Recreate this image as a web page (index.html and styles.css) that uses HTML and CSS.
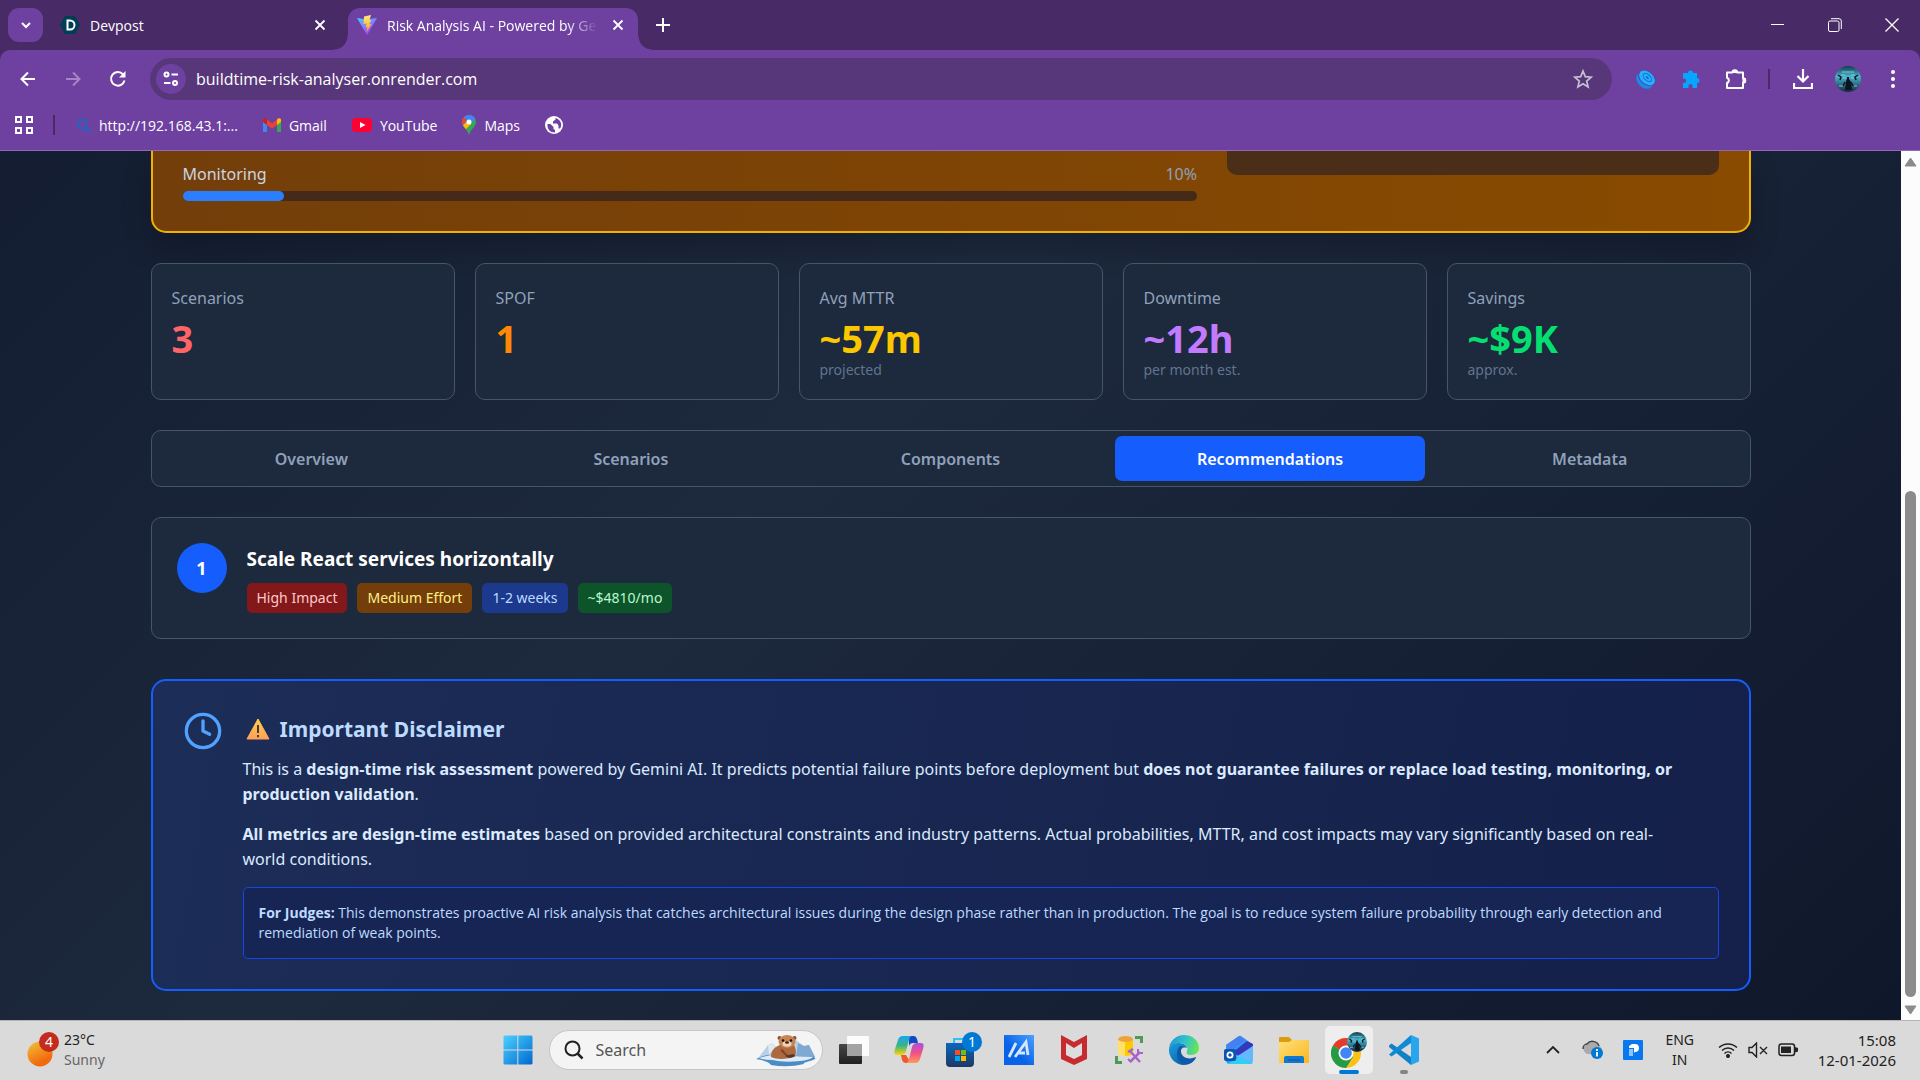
FILE: index.html
```
<!DOCTYPE html>
<html lang="en">
<head>
    <meta charset="UTF-8">
    <meta name="viewport" content="width=device-width, initial-scale=1.0">
    <title>Risk Analysis AI - Powered by Gemini</title>
    <link rel="stylesheet" href="styles.css">
</head>
<body>
    <!-- Shared symbols -->
    <svg class="defs" width="0" height="0">
        <defs>
            <symbol id="close" viewBox="0 0 12 12"><path d="M1.5 1.5l9 9M10.5 1.5l-9 9" fill="none" stroke="currentColor" stroke-width="1.8"/></symbol>
            <linearGradient id="avatarFill" x1="0" y1="0" x2="0" y2="1">
                <stop offset="0" stop-color="#123a4c"/>
                <stop offset="0.4" stop-color="#4ab4cc"/>
                <stop offset="1" stop-color="#14283a"/>
            </linearGradient>
            <symbol id="avatar" viewBox="0 0 26 26">
                <circle cx="13" cy="13" r="13" fill="url(#avatarFill)"/>
                <path d="M3 9l3 2-1 3M23 9l-3 2 1 3M8 20l2-4M18 20l-2-4" stroke="#0a1624" stroke-width="1.500" fill="none"/>
                <path d="M10 24l1-9 1-2v-2h2v2l2 3 1 8z" fill="#0a1424"/>
                <path d="M7 6h12M6 9h4M16 9h4M8 12h3M16 12h3M4 20h4M19 20h3" stroke="#7cc8d8" stroke-width="1"/>
            </symbol>
        </defs>
    </svg>

    <header class="browser">
        <div class="tab-strip">
            <button class="tab-search" aria-label="Search tabs">
                <svg width="12" height="12" viewBox="0 0 12 12"><path d="M2 4l4 4 4-4" fill="none" stroke="#fff" stroke-width="2"/></svg>
            </button>
            <div class="tab">
                <svg width="20" height="20" viewBox="0 0 20 20"><path d="M5 1h10l5 9-5 9H5L0 10z" fill="#003e54"/><path d="M7.500 5.500V14.500H10a4.500 4.500 0 0 0 0-9z" fill="none" stroke="#fff" stroke-width="2"/></svg>
                <span class="tab-title">Devpost</span>
                <button class="tab-close" aria-label="Close Devpost"><svg width="12" height="12"><use href="#close"/></svg></button>
            </div>
            <div class="tab tab-active">
                <svg width="20" height="20" viewBox="0 0 20 20">
                    <defs>
                        <linearGradient id="vite" x1="0" y1="0" x2="0.6" y2="1"><stop offset="0" stop-color="#41d1ff"/><stop offset="1" stop-color="#bd34fe"/></linearGradient>
                        <linearGradient id="bolt" x1="0" y1="0" x2="0" y2="1"><stop offset="0" stop-color="#ffea83"/><stop offset="1" stop-color="#ffa800"/></linearGradient>
                    </defs>
                    <path d="M0 3l9.500 1.500L20 3 10 20z" fill="url(#vite)"/>
                    <path d="M14 0L7 1.500 6.500 9l3-.5-.8 4 1.800-.5L9.500 17l5-8-2.500.5L14.500 5l-2 .3z" fill="url(#bolt)"/>
                </svg>
                <span class="tab-title tab-fade">Risk Analysis AI - Powered by Gemini</span>
                <button class="tab-close" aria-label="Close Risk Analysis AI"><svg width="12" height="12"><use href="#close"/></svg></button>
            </div>
            <button class="new-tab" aria-label="New tab">
                <svg width="14" height="14" viewBox="0 0 14 14"><path d="M7 0v14M0 7h14" stroke="#fff" stroke-width="2"/></svg>
            </button>
            <div class="window-controls">
                <button aria-label="Minimize"><svg width="14" height="14" viewBox="0 0 14 14"><path d="M0 6.500h13" stroke="#fff"/></svg></button>
                <button aria-label="Restore"><svg width="14" height="14" viewBox="0 0 14 14"><rect x="0.500" y="3" width="10.500" height="10.500" rx="1.500" fill="none" stroke="#fff"/><path d="M3 .7h8a2.300 2.300 0 0 1 2.300 2.300v8" fill="none" stroke="#fff"/></svg></button>
                <button aria-label="Close window"><svg width="14" height="14" viewBox="0 0 14 14"><path d="M.5.5l13 13M13.500.5l-13 13" stroke="#fff" stroke-width="1.300"/></svg></button>
            </div>
        </div>

        <div class="toolbar">
            <div class="nav-buttons">
                <button aria-label="Back"><svg width="16" height="16" viewBox="0 0 16 16"><path d="M15 8H2M8 1.500L1.500 8 8 14.500" fill="none" stroke="#fff" stroke-width="2"/></svg></button>
                <button aria-label="Forward" disabled><svg width="16" height="16" viewBox="0 0 16 16"><path d="M1 8h13M8 1.500L14.500 8 8 14.500" fill="none" stroke="#a386c3" stroke-width="2"/></svg></button>
                <button aria-label="Reload"><svg width="18" height="18" viewBox="0 0 18 18"><path d="M15.500 10.500A6.800 6.800 0 1 1 14 4.300" fill="none" stroke="#fff" stroke-width="2"/><path d="M16.500 1v6.500H10z" fill="#fff"/></svg></button>
            </div>
            <div class="address-bar">
                <button class="site-info" aria-label="Site information">
                    <svg width="16" height="16" viewBox="0 0 16 16" fill="none" stroke="#fff" stroke-width="2"><circle cx="3.500" cy="3.500" r="2"/><path d="M8.500 3.500H15M1 12h6.500"/><circle cx="12" cy="12" r="2"/></svg>
                </button>
                <input type="text" aria-label="Address" value="buildtime-risk-analyser.onrender.com">
                <button class="bookmark" aria-label="Bookmark this page">
                    <svg width="20" height="20" viewBox="0 0 20 20"><path d="M10 2l2.300 5.600 6 .5-4.600 3.900 1.400 5.900L10 14.800 4.900 17.900l1.400-5.900L1.700 8.100l6-.5z" fill="none" stroke="#c9bfd3" stroke-width="1.700"/></svg>
                </button>
            </div>
            <div class="extensions">
                <button aria-label="Extension"><svg width="20" height="20" viewBox="0 0 20 20"><g transform="rotate(42 10 10)"><ellipse cx="10" cy="12" rx="9.500" ry="7" fill="#168be8"/><ellipse cx="10" cy="8.500" rx="9.500" ry="6.500" fill="#25b0ff" stroke="#5b3fa8"/><ellipse cx="10" cy="8" rx="5" ry="3" fill="none" stroke="#176cc8"/><ellipse cx="10" cy="8" rx="2" ry="1" fill="#176cc8"/></g></svg></button>
                <button aria-label="Puzzle extension"><svg width="20" height="20" viewBox="0 0 20 20"><path d="M2 4h5a2.500 2.500 0 1 1 5 0h4v5a2.500 2.500 0 1 1 0 5v5h-4.500v-2a2 2 0 0 0-4 0v2H2v-5h1a2 2 0 0 0 0-4.500H2z" fill="#05a6ff"/></svg></button>
                <button aria-label="Extensions"><svg width="22" height="22" viewBox="0 0 22 22"><path d="M2 4.500h5.500a2.300 2.300 0 0 1 4.600 0H18v5.700a2.200 2.200 0 0 1 0 4.500V20H2v-5a2.800 2.800 0 0 0 0-5.300z" fill="none" stroke="#fff" stroke-width="2" stroke-linejoin="round"/><path d="M8 3.500h4M19 10v5" stroke="#fff" stroke-width="3"/></svg></button>
                <span class="divider"></span>
                <button aria-label="Downloads"><svg width="20" height="22" viewBox="0 0 20 22"><path d="M10 1v12M4.500 8l5.500 5.500L15.500 8M1 15v5h18v-5" fill="none" stroke="#fff" stroke-width="2.200"/></svg></button>
                <button aria-label="Profile"><svg width="26" height="26"><use href="#avatar"/></svg></button>
                <button aria-label="Menu"><svg width="6" height="20" viewBox="0 0 6 20" fill="#fff"><circle cx="3" cy="3" r="2"/><circle cx="3" cy="10" r="2"/><circle cx="3" cy="17" r="2"/></svg></button>
            </div>
        </div>

        <nav class="bookmarks">
            <button class="apps" aria-label="Apps"><svg width="18" height="18" viewBox="0 0 18 18" fill="none" stroke="#fff" stroke-width="2"><path d="M1 1h5v5H1zM12 1h5v5h-5zM1 12h5v5H1zM12 12h5v5h-5z"/></svg></button>
            <span class="divider"></span>
            <a href="#"><svg width="16" height="16" viewBox="0 0 16 16"><circle cx="7.500" cy="7" r="4.500" fill="none" stroke="#1769c0" stroke-width="1.800"/><path d="M10.500 10.500L15 15" stroke="#1769c0" stroke-width="2"/></svg>http://192.168.43.1:...</a>
            <a href="#"><svg width="18" height="14" viewBox="0 0 18 14"><path d="M0 2v12h4V5z" fill="#4285f4"/><path d="M14 5v9h4V2z" fill="#34a853"/><path d="M14 1.500V7l4-3V2c0-2-2.500-2.500-4-.5z" fill="#fbbc04"/><path d="M4 1.500l5 4 5-4V7L9 10.500 4 7z" fill="#ea4335"/><path d="M0 2v2l4 3V1.500C2.500-.5 0 0 0 2z" fill="#c5221f"/></svg>Gmail</a>
            <a href="#"><svg width="20" height="14" viewBox="0 0 20 14"><rect width="20" height="14" rx="4" fill="#f03"/><path d="M8 4l5.500 3L8 10z" fill="#fff"/></svg>YouTube</a>
            <a href="#"><svg width="14" height="20" viewBox="0 0 14 20"><path d="M7 0a7 7 0 0 1 7 7c0 5-5.500 7-7 13C5.500 14 0 12 0 7a7 7 0 0 1 7-7z" fill="#34a853"/><path d="M7 0a7 7 0 0 1 6.500 4.500L2.500 12.500 0 7a7 7 0 0 1 7-7z" fill="#4285f4"/><path d="M1.500 2.500L5 5 .9 10.300A7 7 0 0 1 1.500 2.500z" fill="#ea4335"/><path d="M.9 10.300L4.500 7 9 9l-5 5.300z" fill="#fbbc04"/><circle cx="7" cy="7" r="2.500" fill="#fff"/></svg>Maps</a>
            <a href="#" aria-label="Web page"><svg width="18" height="18" viewBox="0 0 18 18"><circle cx="9" cy="9" r="9" fill="#fff"/><path d="M2.500 8h3l3 3v2l1.500 1v2.500C5 16.500 2 13 2.500 8z" fill="#6e41a1"/><path d="M10.500 2v1.500L8 5.500v2h4l1.500 2v3h1.500c1.500-2 1.500-4.500.5-6.500S12.500 2.500 10.500 2z" fill="#6e41a1"/></svg></a>
        </nav>
    </header>

    <main class="viewport">
        <div class="page">
            <div class="container">
                <section class="risk-card">
                    <div class="risk-bars">
                        <div class="risk-label"><span>Monitoring</span><span class="risk-value">10%</span></div>
                        <div class="risk-track"><div class="risk-fill" style="width: 10%"></div></div>
                    </div>
                    <div class="risk-panel"></div>
                </section>

                <section class="stats">
                    <div class="stat"><p class="stat-name">Scenarios</p><p class="stat-value red">3</p></div>
                    <div class="stat"><p class="stat-name">SPOF</p><p class="stat-value orange">1</p></div>
                    <div class="stat"><p class="stat-name">Avg MTTR</p><p class="stat-value yellow">~57m</p><p class="stat-note">projected</p></div>
                    <div class="stat"><p class="stat-name">Downtime</p><p class="stat-value purple">~12h</p><p class="stat-note">per month est.</p></div>
                    <div class="stat"><p class="stat-name">Savings</p><p class="stat-value green">~$9K</p><p class="stat-note">approx.</p></div>
                </section>

                <nav class="tabs">
                    <button>Overview</button>
                    <button>Scenarios</button>
                    <button>Components</button>
                    <button class="active">Recommendations</button>
                    <button>Metadata</button>
                </nav>

                <section class="recommendation">
                    <div class="rec-number">1</div>
                    <div>
                        <h4>Scale React services horizontally</h4>
                        <div class="badges">
                            <span class="badge badge-red">High Impact</span>
                            <span class="badge badge-yellow">Medium Effort</span>
                            <span class="badge badge-blue">1-2 weeks</span>
                            <span class="badge badge-green">~$4810/mo</span>
                        </div>
                    </div>
                </section>

                <section class="disclaimer">
                    <svg class="clock-icon" width="40" height="40" viewBox="0 0 24 24" fill="none" stroke="#51a2ff" stroke-width="2" stroke-linecap="round" stroke-linejoin="round"><circle cx="12" cy="12" r="10"/><path d="M12 6v6l4 2"/></svg>
                    <div class="disclaimer-body">
                        <h3>
                            <svg width="24" height="22" viewBox="0 0 24 22"><defs><linearGradient id="warn" x1="0" y1="0" x2="0" y2="1"><stop offset="0" stop-color="#ffcf48"/><stop offset="1" stop-color="#ffa05a"/></linearGradient></defs><path d="M12 1l11 20H1z" fill="url(#warn)" stroke="url(#warn)" stroke-linejoin="round"/><path d="M12 7v8M12 17v2.300" stroke="#453b35" stroke-width="2"/></svg>
                            Important Disclaimer
                        </h3>
                        <p>This is a <strong>design-time risk assessment</strong> powered by Gemini AI. It predicts potential failure points before deployment but <strong>does not guarantee failures or replace load testing, monitoring, or production validation</strong>.</p>
                        <p><strong>All metrics are design-time estimates</strong> based on provided architectural constraints and industry patterns. Actual probabilities, MTTR, and cost impacts may vary significantly based on real-world conditions.</p>
                        <div class="judges"><strong>For Judges:</strong> This demonstrates proactive AI risk analysis that catches architectural issues during the design phase rather than in production. The goal is to reduce system failure probability through early detection and remediation of weak points.</div>
                    </div>
                </section>
            </div>
        </div>
        <div class="scrollbar">
            <svg width="13" height="10" viewBox="0 0 13 10"><path d="M6.500 1L12 9H1z" fill="#8b8b8b" stroke="#8b8b8b" stroke-linejoin="round"/></svg>
            <div class="scroll-space"></div>
            <div class="scroll-thumb"></div>
            <svg width="13" height="10" viewBox="0 0 13 10"><path d="M6.500 9L12 1H1z" fill="#8b8b8b" stroke="#8b8b8b" stroke-linejoin="round"/></svg>
        </div>
    </main>

    <footer class="taskbar">
        <button class="weather">
            <svg width="32" height="36" viewBox="0 0 32 36"><defs><linearGradient id="sun" x1="0.200" y1="0" x2="0.700" y2="1"><stop offset="0" stop-color="#f0bd35"/><stop offset="0.800" stop-color="#f26a0d"/></linearGradient></defs><circle cx="13" cy="22" r="12.500" fill="url(#sun)"/><circle cx="22" cy="10" r="10" fill="#c42b1c"/><text x="22" y="15" class="icon-text">4</text></svg>
            <span class="weather-text"><span>23°C</span><span class="muted">Sunny</span></span>
        </button>

        <div class="task-apps">
            <button aria-label="Start"><svg width="30" height="30" viewBox="0 0 30 30"><defs><linearGradient id="win" x1="0" y1="0" x2="1" y2="1"><stop offset="0" stop-color="#4cd0ff"/><stop offset="1" stop-color="#0069cf"/></linearGradient></defs><path d="M1.500 0.500h12.800v14H.5v-13zM15.300.5h13.200l1 1v13H15.300zM.5 15.500h13.800v14H1.500l-1-1zM15.300 15.500h14.200v13l-1 1H15.300z" fill="url(#win)"/></svg></button>
            <label class="search">
                <svg width="20" height="20" viewBox="0 0 20 20"><circle cx="8.500" cy="8.500" r="7" fill="none" stroke="#222" stroke-width="2"/><path d="M13.500 13.500l5 5" stroke="#222" stroke-width="2.500"/></svg>
                <input type="text" placeholder="Search" aria-label="Search">
                <svg width="60" height="34" viewBox="0 0 60 34">
                    <path d="M3 24l9-12 4-2 4 4 8-5 12-2 8 6 5-1 6 12z" fill="#b9cfe4"/>
                    <path d="M42 10l6 3 5-1 6 12H40z" fill="#7fa9d0"/>
                    <path d="M12 12l4-2 3 4-6 8z" fill="#dfe9f2"/>
                    <path d="M0 26q10-6 26-4t32 2q4 2-4 4t-6 3q-16 4-33 1Q12 28 0 26z" fill="#4b8cc4"/>
                    <path d="M3 25q14-5 27-3t27 2q-3 3-13 4-16 2-28-1-8 0-13-2z" fill="#dcebf7"/>
                    <path d="M15 24c0-8 5-10 9-12l14 0c2 4 3 9 0 12-6 2-17 3-23 0z" fill="#ad683e"/>
                    <path d="M25 17c4 2 4 6 9 7" stroke="#7b4428" stroke-width="2" fill="none"/>
                    <path d="M29 23l8-2 3 2-6 2z" fill="#5c3230"/>
                    <circle cx="23.500" cy="5" r="2" fill="#8b4f2e"/><circle cx="38.500" cy="5" r="2" fill="#8b4f2e"/>
                    <ellipse cx="31" cy="8.500" rx="8.500" ry="6.500" fill="#c88454"/>
                    <ellipse cx="31" cy="11" rx="4.500" ry="2.800" fill="#f2d5b8"/>
                    <circle cx="27" cy="7.500" r="1.300" fill="#1c1210"/><circle cx="35" cy="7.500" r="1.300" fill="#1c1210"/><ellipse cx="31" cy="9.500" rx="2" ry="1.200" fill="#37221f"/>
                </svg>
            </label>
            <button aria-label="Task view"><svg width="30" height="30" viewBox="0 0 30 30"><defs><linearGradient id="tv" x1="0" y1="0" x2="0" y2="1"><stop offset="0" stop-color="#474747"/><stop offset="1" stop-color="#202020"/></linearGradient></defs><rect y="9" width="23" height="20" rx="1" fill="url(#tv)"/><rect x="8" y="1" width="22" height="20" rx="1" fill="#fff" opacity="0.900"/><rect x="8" y="9" width="15" height="12" fill="#a3a3a3"/></svg></button>
            <button aria-label="Copilot"><svg width="30" height="30" viewBox="0 0 30 30"><defs><linearGradient id="cp1" x1="0" y1="0" x2="0" y2="1"><stop offset="0" stop-color="#18a7ee"/><stop offset="0.500" stop-color="#37b489"/><stop offset="1" stop-color="#ffd500"/></linearGradient><linearGradient id="cp2" x1="0" y1="0" x2="0" y2="1"><stop offset="0" stop-color="#a852e0"/><stop offset="0.500" stop-color="#f25084"/><stop offset="1" stop-color="#ff9a55"/></linearGradient></defs><path d="M15 1h5q2 0 3 3l1 4h-5q-3 0-4 3z" fill="#1349c4"/><path d="M7 20l1 5q1 3 4 3h5l-5-8z" fill="#ef5a2a"/><path d="M9 1h9q-2 0-3 4l-3 11q-1 4-5 4H3q-4 0-2-6L4 5q1-4 5-4z" fill="url(#cp1)"/><path d="M21 28h-9q2 0 3-4l3-12q1-4 5-4h4q4 0 2 6l-3 10q-1 4-5 4z" fill="url(#cp2)"/></svg></button>
            <button aria-label="Microsoft Store"><svg width="36" height="36" viewBox="0 0 36 36"><defs><linearGradient id="store" x1="0" y1="0" x2="0" y2="1"><stop offset="0" stop-color="#0a68bd"/><stop offset="1" stop-color="#203763"/></linearGradient></defs><path d="M8 11V7h14v4" fill="none" stroke="#2fc0f4" stroke-width="2"/><path d="M0 11h28v20q0 4-4 4H4q-4 0-4-4z" fill="url(#store)"/><path d="M9 18h5v5H9z" fill="#f25022"/><path d="M15 18h5v5h-5z" fill="#7fba00"/><path d="M9 24h5v5H9z" fill="#00a4ef"/><path d="M15 24h5v5h-5z" fill="#ffb900"/><circle cx="26" cy="10" r="10" fill="#0078d4"/><text x="26" y="15" class="icon-text">1</text></svg></button>
            <button aria-label="MyASUS"><svg width="30" height="30" viewBox="0 0 30 30"><defs><linearGradient id="asus" x1="0" y1="1" x2="1" y2="0"><stop offset="0.400" stop-color="#0763e8"/><stop offset="1" stop-color="#4ba0ff"/></linearGradient></defs><path d="M0 0h30v30H0z" fill="url(#asus)"/><path d="M5 22L12 8M11 22L22 7l2 13M15 18h6" fill="none" stroke="#d4e8ff" stroke-width="2.800"/></svg></button>
            <button aria-label="McAfee"><svg width="28" height="30" viewBox="0 0 28 30"><path d="M1 0l13 7L27 0v24l-13 6L1 24z" fill="#c62c2f"/><path d="M6 8l8 5 8-5v12l-8 4-8-4z" fill="#ddd"/></svg></button>
            <button aria-label="Database tools"><svg width="30" height="30" viewBox="0 0 30 30"><path d="M4 4h15v15q-7 4-15 0z" fill="#ffe06a"/><path d="M11 5h8v14q-3 2-8 2z" fill="#fcc905"/><ellipse cx="11.500" cy="4" rx="7.500" ry="3" fill="#eda23b"/><path d="M21 2.500h6.500V8M2.500 21v6.500H8" fill="none" stroke="#4c9b4f" stroke-width="3"/><path d="M16 27l10-10M14 17l5-3M16 16l10 11" stroke="#aa64c8" stroke-width="2.500"/><path d="M24 14v4h5M14 24l3 3" fill="none" stroke="#aa64c8" stroke-width="2"/></svg></button>
            <button aria-label="Edge"><svg width="30" height="30" viewBox="0 0 30 30"><defs><linearGradient id="edge" x1="0" y1="0.400" x2="1" y2="0.600"><stop offset="0" stop-color="#2299d8"/><stop offset="0.500" stop-color="#2fc3cb"/><stop offset="1" stop-color="#6be84c"/></linearGradient><linearGradient id="edgeb" x1="0" y1="0" x2="1" y2="1"><stop offset="0" stop-color="#1ba0dd"/><stop offset="1" stop-color="#094a95"/></linearGradient></defs><path d="M0 14A15 15 0 0 1 15 0c9 0 15 6 15 13 0 5-4 7-8 7-4 0-5-2-4-4 2-4-2-8-7-8-6 0-10 3-11 6z" fill="url(#edge)"/><path d="M0 14c1-4 5-6 10-6 5 0 8 3 8 5-6-2-8 4-5 8 3 4 9 5 14 1-2 5-7 8-12 8A15 15 0 0 1 0 14z" fill="url(#edgeb)"/><path d="M10 12c-4 7-2 15 5 17 6 1 11-3 12-7-7 3-14 1-15-5-.4-3 1-5 3-6-2 0-4 0-5 1z" fill="#0c5aa8"/></svg></button>
            <button aria-label="Outlook"><svg width="30" height="30" viewBox="0 0 30 30"><path d="M2 10L15 1q1-.7 2 0l11 8v17q0 3-3 3H6q-4 0-4-4z" fill="#239df3"/><path d="M2 10L15 1l7 4L6 16z" fill="#477ff0"/><path d="M8 18L23 6l6 3v2L16 21z" fill="#3736bd"/><path d="M12 22l17-11v15l-1 2z" fill="#65b7ff"/><path d="M3 29l13-7 13 6q-1 1-3 1z" fill="#31cef4"/><rect y="14" width="12" height="12" rx="2" fill="#0b54b2"/><circle cx="6" cy="20" r="2.600" fill="none" stroke="#fff" stroke-width="1.800"/></svg></button>
            <button aria-label="File Explorer"><svg width="30" height="28" viewBox="0 0 30 28"><defs><linearGradient id="folder" x1="0" y1="0" x2="1" y2="1"><stop offset="0" stop-color="#ffe07a"/><stop offset="1" stop-color="#fbb71c"/></linearGradient></defs><path d="M0 2q0-1 1-1h9l3 3h16q1 0 1 1v8H0z" fill="#db9d0b"/><path d="M0 6h10l3-2h16q1 0 1 1v22H0z" fill="url(#folder)"/><path d="M5 27v-5q0-2 2-2h16q2 0 2 2v5z" fill="#1178cd"/><path d="M9 24h12" stroke="#0855a0"/></svg></button>
            <button class="running" aria-label="Google Chrome"><svg width="36" height="36" viewBox="0 0 36 36"><circle cx="15" cy="21" r="15" fill="#fbc116"/><path d="M15 21L2 13.500A15 15 0 0 1 28 13.500H15z" fill="#e33b2e"/><path d="M2 13.500A15 15 0 0 0 15 36l7-11-7-4z" fill="#269a45"/><circle cx="15" cy="21" r="7.500" fill="#fff"/><circle cx="15" cy="21" r="5.800" fill="#4285f4"/><use href="#avatar" x="16" y="0" width="20" height="20"/></svg></button>
            <button class="opened" aria-label="Visual Studio Code"><svg width="30" height="30" viewBox="0 0 30 30"><path d="M0 10.500l2.500-2L22 22v8L0 12z" fill="#1280c4"/><path d="M0 19.500L22 0v8L2.500 21.500z" fill="#0e8ad6"/><path d="M22 0l8 3.500v23L22 30z" fill="#27a6ee"/></svg></button>
        </div>

        <div class="tray">
            <button aria-label="Show hidden icons"><svg width="14" height="10" viewBox="0 0 14 10"><path d="M1 8l6-6 6 6" fill="none" stroke="#222" stroke-width="1.800"/></svg></button>
            <button aria-label="OneDrive"><svg width="22" height="20" viewBox="0 0 22 20"><path d="M5 14a5 5 0 0 1-1-9C7 0 15-1 17 6c4 1 4 8 0 8z" fill="#aaa"/><path d="M1 9c0-3 2-5 4-5 4-5 11-2 12 2" fill="none" stroke="#444" stroke-width="1.500"/><circle cx="15" cy="13" r="6" fill="#0078d4"/><path d="M15 9v2M15 12v4.500" stroke="#fff" stroke-width="1.800"/></svg></button>
            <button aria-label="Print helper"><svg width="20" height="20" viewBox="0 0 20 20"><rect width="20" height="20" rx="1" fill="#0878f0"/><path d="M6 6l3-2h3a4 4 0 0 1 0 8l-1 1V8H6z" fill="#fff"/><path d="M6 9h4v7H6z" fill="#8cc4ff"/></svg></button>
            <button class="tray-text language"><span>ENG</span><span>IN</span></button>
            <button class="status" aria-label="Network, volume and battery">
                <svg width="20" height="16" viewBox="0 0 20 16" fill="none" stroke="#222" stroke-width="1.500"><path d="M1 5.500a13 13 0 0 1 18 0M4 8.500a8.500 8.500 0 0 1 12 0M6.500 11.500a5 5 0 0 1 7 0"/><circle cx="10" cy="14" r="1.300" fill="#222"/></svg>
                <svg width="20" height="16" viewBox="0 0 20 16" fill="none" stroke="#222" stroke-width="1.400"><path d="M1 5.500h3L8.500 1v14L4 10.500H1zM12 5l7 7M19 5l-7 7"/></svg>
                <svg width="20" height="14" viewBox="0 0 20 14"><rect x="1" y="1" width="15.500" height="11.500" rx="2.500" fill="none" stroke="#222" stroke-width="1.500"/><rect x="3" y="3.500" width="10" height="6.500" fill="#222"/><path d="M17 4l3 1v3.500l-3 1z" fill="#222"/></svg>
            </button>
            <button class="tray-text clock"><span>15:08</span><span>12-01-2026</span></button>
        </div>
    </footer>
</body>
</html>
```
FILE: styles.css
```
* {
    box-sizing: border-box;
}

body {
    margin: 0;
    height: 100vh;
    display: flex;
    flex-direction: column;
    overflow: hidden;
    font-family: "Noto Sans", "Open Sans", sans-serif;
    font-size: 16px;
}

h3, h4, p {
    margin: 0;
}

button {
    display: flex;
    align-items: center;
    justify-content: center;
    padding: 0;
    border: none;
    background: none;
    color: inherit;
    font: inherit;
}

input {
    min-width: 0;
    border: none;
    outline: none;
    background: none;
    color: inherit;
    font: inherit;
}

svg {
    display: block;
    flex-shrink: 0;
}

.defs {
    position: absolute;
}

/* Browser frame */
.browser {
    background-color: #472a66;
    color: #fff;
    font-family: "Open Sans", "Noto Sans", sans-serif;
    font-size: 14px;
    border-bottom: 1px solid #9068b8;
}

.tab-strip {
    display: flex;
    height: 50px;
    padding: 8px 0 0 8px;
}

.tab-search {
    width: 35px;
    height: 34px;
    border-radius: 11px;
    background-color: #6e41a1;
}

.tab {
    display: flex;
    align-items: center;
    gap: 10px;
    width: 305px;
    height: 34px;
    padding: 0 18px 0 17px;
}

.tab-active {
    position: relative;
    width: 290px;
    height: 42px;
    padding: 0 10px 8px 9px;
    border-radius: 12px 12px 0 0;
    background-color: #6e41a1;
}

/* Curved feet of the active tab */
.tab-active::before,
.tab-active::after {
    content: "";
    position: absolute;
    bottom: 0;
    width: 14px;
    height: 14px;
}

.tab-active::before {
    left: -14px;
    background: radial-gradient(circle at 0 0, transparent 13px, #6e41a1 14px);
}

.tab-active::after {
    right: -14px;
    background: radial-gradient(circle at 100% 0, transparent 13px, #6e41a1 14px);
}

.tab-title {
    flex: 1;
    overflow: hidden;
    white-space: nowrap;
}

.tab-fade {
    mask-image: linear-gradient(90deg, #000 85%, transparent);
}

.tab-close {
    width: 20px;
    height: 20px;
}

.new-tab {
    width: 50px;
    height: 34px;
}

.window-controls {
    display: flex;
    margin: -8px 0 0 auto;
}

.window-controls button {
    width: 57px;
    height: 50px;
}

.toolbar {
    display: flex;
    align-items: center;
    height: 58px;
    padding-right: 5px;
    border-radius: 10px 10px 0 0;
    background-color: #6e41a1;
}

.nav-buttons {
    display: flex;
    padding: 0 10px 0 5px;
}

.nav-buttons button {
    width: 45px;
    height: 40px;
}

.address-bar {
    flex: 1;
    display: flex;
    align-items: center;
    height: 42px;
    padding: 0 19px 0 6px;
    border-radius: 21px;
    background-color: #573779;
}

.address-bar input {
    flex: 1;
    padding: 0 10px;
    font-size: 16px;
}

.site-info {
    width: 30px;
    height: 30px;
    border-radius: 15px;
    background-color: #6e41a1;
}

.extensions {
    display: flex;
    align-items: center;
    padding-left: 11px;
}

.extensions button {
    width: 45px;
    height: 40px;
}

.divider {
    width: 2px;
    height: 20px;
    margin: 0 10px;
    background-color: #472a66;
}

.bookmarks {
    display: flex;
    align-items: center;
    gap: 20px;
    height: 42px;
    padding: 0 15px 8px;
    background-color: #6e41a1;
}

.bookmarks .divider {
    margin: 0;
}

.bookmarks a {
    display: flex;
    align-items: center;
    gap: 8px;
    color: #fff;
    text-decoration: none;
}

.bookmarks a + a {
    margin-left: 5px;
}

/* Page */
.viewport {
    flex: 1;
    display: flex;
    min-height: 0;
}

.page {
    flex: 1;
    overflow: hidden;
    color: #fff;
    background: linear-gradient(135deg, #0f172b, #1d293d 50%, #0f172b) bottom / 100% 164%;
}

.container {
    max-width: 1600px;
    margin: 0 auto;
}

.risk-card {
    display: flex;
    gap: 30px;
    height: 82px;
    padding: 0 30px;
    border: 2px solid #f0b100;
    border-top: none;
    border-radius: 0 0 15px 15px;
    background: linear-gradient(90deg, #733e0a, #894b00);
    box-shadow: 0 16px 30px rgba(0, 0, 0, 0.2);
}

.risk-bars {
    flex: 1;
    padding-top: 11px;
}

.risk-label {
    display: flex;
    justify-content: space-between;
    line-height: 25px;
    margin-bottom: 4px;
    color: #cad5e2;
}

.risk-value {
    color: #90a1b9;
}

.risk-track {
    height: 10px;
    border-radius: 5px;
    background-color: #452a1a;
}

.risk-fill {
    height: 10px;
    border-radius: 5px;
    background-color: #2b7fff;
}

.risk-panel {
    width: 32%;
    height: 24px;
    border-radius: 0 0 10px 10px;
    background-color: #4a2e17;
}

.stats {
    display: grid;
    grid-template-columns: repeat(5, 1fr);
    gap: 20px;
    margin: 30px 0;
}

.stat {
    min-height: 137px;
    padding: 20px;
    border: 1px solid #45556c;
    border-radius: 10px;
    background-color: #1d293d;
}

.stat-name {
    line-height: 28px;
    color: #90a1b9;
}

.stat-value {
    line-height: 52px;
    font-size: 38px;
    font-weight: 700;
}

.stat-note {
    line-height: 12px;
    font-size: 14px;
    color: #62748e;
}

.red { color: #ff6467; }
.orange { color: #ff8904; }
.yellow { color: #fdc700; }
.purple { color: #c27aff; }
.green { color: #05df72; }

.tabs {
    display: flex;
    gap: 10px;
    padding: 5px;
    border: 1px solid #45556c;
    border-radius: 10px;
    background-color: #1d293d;
}

.tabs button {
    flex: 1;
    height: 45px;
    border-radius: 7px;
    color: #90a1b9;
    font-weight: 600;
}

.tabs .active {
    background-color: #155dfc;
    color: #fff;
}

.recommendation {
    display: flex;
    gap: 20px;
    min-height: 122px;
    margin: 30px 0 40px;
    padding: 25px;
    border: 1px solid #45556c;
    border-radius: 10px;
    background-color: #1d293d;
}

.rec-number {
    width: 50px;
    height: 50px;
    border-radius: 50%;
    background-color: #155dfc;
    line-height: 50px;
    text-align: center;
    font-size: 18px;
    font-weight: 700;
}

.recommendation h4 {
    line-height: 32px;
    margin-bottom: 8px;
    font-size: 19px;
}

.badges {
    display: flex;
    gap: 10px;
}

.badge {
    padding: 0 10px;
    border-radius: 5px;
    line-height: 30px;
    font-size: 14px;
}

.badge-red { background-color: #82181a; color: #ffc9c9; }
.badge-yellow { background-color: #733e0a; color: #fff085; }
.badge-blue { background-color: #1c398e; color: #bedbff; }
.badge-green { background-color: #0d542b; color: #b9f8cf; }

.disclaimer {
    display: flex;
    gap: 20px;
    padding: 30px;
    border: 2px solid #155dfc;
    border-radius: 15px;
    background: linear-gradient(100deg, #1c2d57, #14204a);
}

.disclaimer-body {
    flex: 1;
}

.disclaimer h3 {
    display: flex;
    align-items: center;
    gap: 10px;
    line-height: 36px;
    margin-bottom: 10px;
    padding-left: 3px;
    font-size: 21px;
    color: #bedbff;
}

.disclaimer p {
    line-height: 25px;
    margin-bottom: 15px;
    padding-right: 30px;
    color: #dbeafe;
}

.judges {
    padding: 15px;
    border: 1px solid #1447e6;
    border-radius: 5px;
    background-color: #172554;
    font-family: "Open Sans", "Noto Sans", sans-serif;
    line-height: 20px;
    font-size: 14px;
    color: #bedbff;
}

/* Scrollbar */
.scrollbar {
    display: flex;
    flex-direction: column;
    align-items: center;
    width: 19px;
    padding: 6px 0 5px;
    background-color: #fcfcfc;
}

.scroll-space {
    flex: 324;
}

.scroll-thumb {
    flex: 506;
    width: 11px;
    margin-bottom: 8px;
    border-radius: 6px;
    background-color: #8b8b8b;
}

/* Taskbar */
.taskbar {
    display: flex;
    justify-content: space-between;
    align-items: center;
    height: 60px;
    padding-bottom: 2px;
    border-top: 1px solid #b5b5b5;
    background-color: #dadada;
    color: #222;
    font-size: 14px;
}

.weather {
    flex: 1;
    justify-content: flex-start;
    gap: 5px;
    padding-left: 27px;
    line-height: 20px;
    text-align: left;
}

.weather-text {
    display: flex;
    flex-direction: column;
}

.muted {
    color: #666;
}

.icon-text {
    fill: #fff;
    font-size: 14px;
    text-anchor: middle;
}

.task-apps {
    display: flex;
    align-items: center;
    gap: 7px;
    margin-right: 2px;
}

.task-apps button {
    position: relative;
    width: 48px;
    height: 48px;
    border-radius: 5px;
}

.task-apps .running {
    background-color: #eee;
}

.running::after,
.opened::after {
    content: "";
    position: absolute;
    bottom: 0;
    width: 20px;
    height: 4px;
    border-radius: 2px;
    background-color: #0078d4;
}

.opened::after {
    width: 8px;
    background-color: #858585;
}

.search {
    display: flex;
    align-items: center;
    gap: 12px;
    width: 274px;
    height: 40px;
    padding: 0 6px 0 14px;
    border: 1px solid #c6c6c6;
    border-radius: 20px;
    background-color: #f4f4f4;
    font-size: 16px;
}

.search input {
    flex: 1;
    padding: 0;
}

.search input::placeholder {
    color: #555;
}

.tray {
    flex: 1;
    display: flex;
    justify-content: flex-end;
    align-items: center;
    padding-right: 24px;
}

.tray button {
    min-width: 40px;
    height: 48px;
}

.tray-text {
    flex-direction: column;
    line-height: 20px;
}

.tray .language {
    width: 54px;
}

.status {
    gap: 10px;
    padding: 0 11px;
}

.tray .clock {
    align-items: flex-end;
    margin-left: 9px;
    font-size: 15px;
}
```
